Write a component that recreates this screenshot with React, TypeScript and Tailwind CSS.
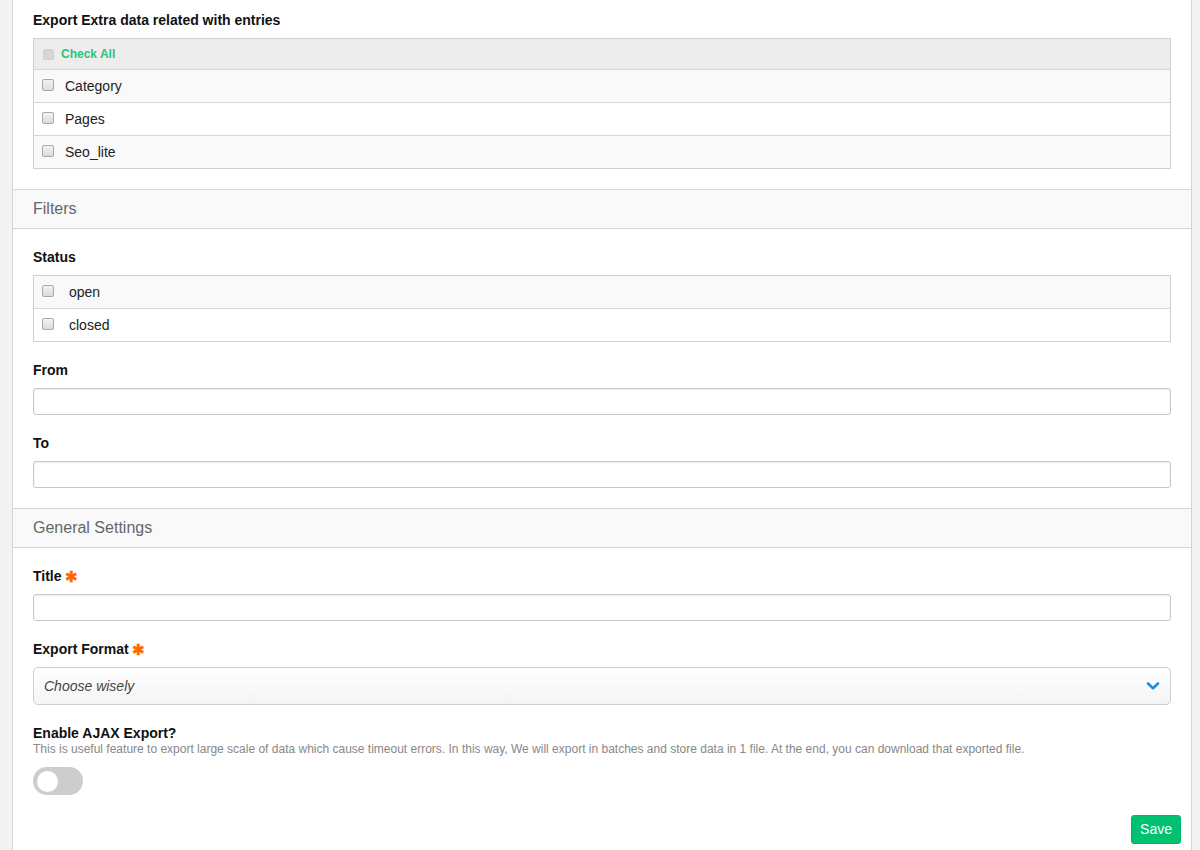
const extraRows = ['Category', 'Pages', 'Seo_lite']
const statusRows = ['open', 'closed']

function Box({ light }: { light?: boolean }) {
  if (light) {
    return <span className="inline-block w-[11px] h-[11px] rounded-[2px] bg-[#d6d6d6] border border-[#d0d0d0]" />
  }
  return (
    <span className="inline-block w-[12px] h-[12px] rounded-[2px] border border-[#a9a9a9] bg-gradient-to-b from-[#f2f2f2] to-[#dcdcdc]" />
  )
}

function Label({ children, required }: { children: React.ReactNode; required?: boolean }) {
  return (
    <div className="text-[14px] leading-[20px] font-bold text-[#111] flex items-center gap-[3px]">
      {children}
      {required && <span className="text-[#ff6a00] text-[15px] font-bold leading-none">✱</span>}
    </div>
  )
}

function SectionHeader({ title }: { title: string }) {
  return (
    <div className="bg-[#f9f9f9] border-y border-[#d6d6d6] h-[40px] flex items-center px-[20px] text-[16px] text-[#666]">
      {title}
    </div>
  )
}

function TextInput() {
  return (
    <div className="h-[27px] w-full rounded-[3px] border border-[#c6c6c6] bg-white shadow-[inset_0_1px_2px_rgba(0,0,0,0.08)]" />
  )
}

export default function App() {
  return (
    <div
      className="min-h-screen bg-[#f2f3f5] pl-[12px] pr-[8px]"
      style={{ fontFamily: '"Liberation Sans", Arial, sans-serif' }}
    >
      <div className="bg-white border-x border-[#d4d4d4] min-h-[850px]">
        {/* Extra data */}
        <div className="px-[20px] pt-[10px] pb-[20px]">
          <Label>Export Extra data related with entries</Label>
          <div className="mt-[8px] border border-[#cfcfcf]">
            <div className="h-[30px] bg-[#ededed] flex items-center pl-[9px] gap-[7px]">
              <Box light />
              <span className="text-[12px] font-bold text-[#2ec27e]">Check All</span>
            </div>
            {extraRows.map((r, i) => (
              <div
                key={r}
                className={`h-[33px] border-t border-[#d6d6d6] flex items-center pl-[8px] gap-[11px] text-[14px] text-[#222] ${
                  i % 2 === 0 ? 'bg-[#f9f9f9]' : 'bg-white'
                }`}
              >
                <span className="-mt-[3px] flex"><Box /></span>
                <span>{r}</span>
              </div>
            ))}
          </div>
        </div>

        <SectionHeader title="Filters" />

        <div className="px-[20px] pt-[18px] pb-[20px]">
          <Label>Status</Label>
          <div className="mt-[8px] border border-[#cfcfcf]">
            {statusRows.map((r, i) => (
              <div
                key={r}
                className={`flex items-center pl-[8px] gap-[15px] text-[14px] text-[#222] ${
                  i > 0 ? 'h-[33px] border-t border-[#d6d6d6] pt-[1px]' : 'h-[32px]'
                } ${i % 2 === 0 ? 'bg-[#f9f9f9]' : 'bg-white'}`}
              >
                <span className="-mt-[3px] flex"><Box /></span>
                <span>{r}</span>
              </div>
            ))}
          </div>

          <div className="mt-[18px]">
            <Label>From</Label>
            <div className="mt-[8px]"><TextInput /></div>
          </div>
          <div className="mt-[18px]">
            <Label>To</Label>
            <div className="mt-[8px]"><TextInput /></div>
          </div>
        </div>

        <SectionHeader title="General Settings" />

        <div className="px-[20px] pt-[18px]">
          <Label required>Title</Label>
          <div className="mt-[8px]"><TextInput /></div>

          <div className="mt-[18px]">
            <Label required>Export Format</Label>
            <div className="mt-[8px] h-[38px] rounded-[5px] border border-[#cfcfcf] bg-gradient-to-b from-white to-[#f4f4f4] flex items-center justify-between pl-[10px] pr-[10px]">
              <span className="italic text-[14px] text-[#444]">Choose wisely</span>
              <svg width="14" height="10" viewBox="0 0 14 10" fill="none">
                <path d="M2 2.5 L7 7.2 L12 2.5" stroke="#1a8fe0" strokeWidth="2.6" strokeLinecap="round" strokeLinejoin="round" />
              </svg>
            </div>
          </div>

          <div className="mt-[19px]">
            <div className="text-[14px] leading-[18px] font-bold text-[#111]">Enable AJAX Export?</div>
            <div className="text-[12px] leading-[15px] text-[#888]">
              This is useful feature to export large scale of data which cause timeout errors. In this way, We will export in batches and store data in 1 file. At the end, you can download that exported file.
            </div>
            <div className="mt-[10px] w-[50px] h-[28px] rounded-full bg-[#cdcdcd] flex items-center pl-[4px]">
              <span className="w-[21px] h-[21px] rounded-full bg-white" />
            </div>
          </div>
        </div>

        <div className="flex justify-end pr-[10px] mt-[20px]">
          <button className="h-[29px] px-[8px] rounded-[3px] bg-[#00c271] text-white text-[14px] border border-[#00b567]">
            Save
          </button>
        </div>
      </div>
    </div>
  )
}
